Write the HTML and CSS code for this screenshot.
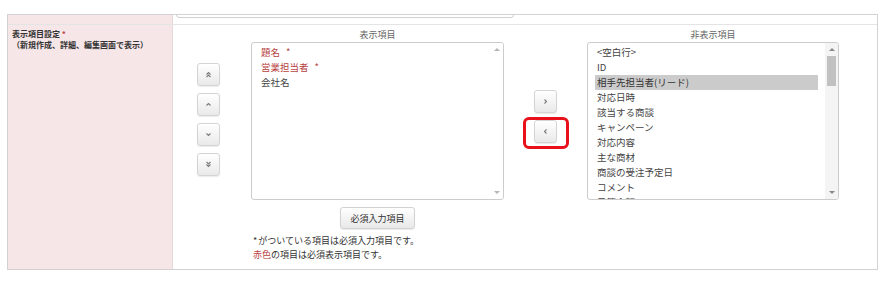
FILE: index.html
```html
<!DOCTYPE html>
<html lang="ja">

<head>
  <meta charset="UTF-8">
  <title>表示項目設定</title>
  <link rel="stylesheet" href="styles.css">
</head>

<body>
  <div class="form-table">
    <div class="row row-prev">
      <div class="label"><span class="req">*</span></div>
      <div class="cell">
        <div class="prev-input"></div>
      </div>
    </div>

    <div class="row">
      <div class="label label-main">
        表示項目設定 <span class="req">*</span><br>（新規作成、詳細、編集画面で表示）
      </div>
      <div class="cell picker">
        <!-- 並び替え -->
        <div class="btn-col order-btns">
          <button class="sq-btn" type="button"><svg viewBox="0 0 7 7"><polyline points="1.5,3.5 3.5,1.5 5.5,3.5" /><polyline points="1.5,6 3.5,4 5.5,6" /></svg></button>
          <button class="sq-btn" type="button"><svg viewBox="0 0 7 7"><polyline points="1.5,4.5 3.5,2.5 5.5,4.5" /></svg></button>
          <button class="sq-btn" type="button"><svg viewBox="0 0 7 7"><polyline points="1.5,2.5 3.5,4.5 5.5,2.5" /></svg></button>
          <button class="sq-btn" type="button"><svg viewBox="0 0 7 7"><polyline points="1.5,1 3.5,3 5.5,1" /><polyline points="1.5,3.5 3.5,5.5 5.5,3.5" /></svg></button>
        </div>

        <div class="list-block list-shown">
          <div class="list-title">表示項目</div>
          <div class="listbox">
            <ul class="items">
              <li class="must">題名<span class="star">*</span></li>
              <li class="must">営業担当者<span class="star">*</span></li>
              <li>会社名</li>
            </ul>
            <div class="scroll off">
              <span class="arrow up"></span>
              <span class="spacer"></span>
              <span class="arrow down"></span>
            </div>
          </div>
          <button class="btn-req" type="button">必須入力項目</button>
          <p class="notes">
            <span class="mark">*</span>がついている項目は必須入力項目です。<br>
            <span class="red">赤色</span>の項目は必須表示項目です。
          </p>
        </div>

        <!-- 移動 -->
        <div class="btn-col move-btns">
          <button class="sq-btn" type="button"><svg viewBox="0 0 7 7"><polyline points="2.5,1.5 4.5,3.5 2.5,5.5" /></svg></button>
          <button class="sq-btn marked" type="button"><svg viewBox="0 0 7 7"><polyline points="4.5,1.5 2.5,3.5 4.5,5.5" /></svg></button>
        </div>

        <div class="list-block list-hidden">
          <div class="list-title">非表示項目</div>
          <div class="listbox">
            <ul class="items">
              <li>&lt;空白行&gt;</li>
              <li>ID</li>
              <li class="selected">相手先担当者(リード)</li>
              <li>対応日時</li>
              <li>該当する商談</li>
              <li>キャンペーン</li>
              <li>対応内容</li>
              <li>主な商材</li>
              <li>商談の受注予定日</li>
              <li>コメント</li>
              <li>予算金額</li>
            </ul>
            <div class="scroll">
              <span class="arrow up"></span>
              <span class="thumb"></span>
              <span class="spacer"></span>
              <span class="arrow down"></span>
            </div>
          </div>
        </div>
      </div>
    </div>
  </div>
</body>

</html>
```

FILE: styles.css
```css
body {
  margin: 0;
  background-color: #ffffff;
  font-family: "Noto Sans CJK JP", "Noto Sans", sans-serif;
  color: #444444;
}

.form-table {
  box-sizing: border-box;
  width: 871px;
  margin: 14px 0 0 7px;
  border: 1px solid #d2d2d2;
}

.row {
  display: flex;
}

.row + .row {
  border-top: 1px solid #e4e4e4;
}

.label {
  box-sizing: border-box;
  width: 165px;
  flex-shrink: 0;
  background-color: #f6e6e8;
  /* rose pâle pour la colonne des libellés */
  border-right: 1px solid #e2dada;
}

.cell {
  flex: 1;
}

.req,
.star,
.red {
  color: #b8433f;
}

/* ligne précédente, coupée en haut */
.row-prev {
  height: 9px;
  overflow: hidden;
}

.row-prev .label {
  padding-left: 5px;
}

.row-prev .req {
  display: block;
  font-size: 9px;
  line-height: 10px;
  margin-top: -4px;
}

.prev-input {
  box-sizing: border-box;
  width: 338px;
  height: 13px;
  margin: -10px 0 0 3px;
  border: 1px solid #d0d0d0;
  border-radius: 3px;
}

.label-main {
  padding: 3px 4px 0 4px;
  font-size: 8px;
  font-weight: bold;
  line-height: 11px;
  color: #333333;
}

.picker {
  display: flex;
  align-items: flex-start;
  padding: 2px 0 7px 24px;
}

.btn-col {
  display: flex;
  flex-direction: column;
  gap: 7px;
  width: 23px;
}

.order-btns {
  padding-top: 36px;
}

.move-btns {
  padding-top: 63px;
  margin-left: 30px;
}

.sq-btn {
  position: relative;
  box-sizing: border-box;
  display: flex;
  align-items: center;
  justify-content: center;
  width: 23px;
  height: 23px;
  padding: 0;
  border: 1px solid #d4d4d4;
  border-radius: 3px;
  background: linear-gradient(#ffffff, #e9e9e9);
  box-shadow: 0 1px 1px rgba(0, 0, 0, 0.08);
}

.sq-btn svg {
  width: 7px;
  height: 7px;
  fill: none;
  stroke: #7a7a7a;
  stroke-width: 1.1;
}

/* cadre rouge d'annotation */
.marked::after {
  content: "";
  position: absolute;
  left: -12px;
  top: -4px;
  box-sizing: border-box;
  width: 46px;
  height: 32px;
  border: 3px solid #e8111b;
  border-radius: 6px;
}

.list-block {
  display: flex;
  flex-direction: column;
}

.list-shown {
  width: 253px;
  margin-left: 31px;
}

.list-hidden {
  width: 252px;
  margin-left: 30px;
}

.list-title {
  font-size: 9px;
  line-height: 15px;
  text-align: center;
  color: #666666;
}

.listbox {
  box-sizing: border-box;
  display: flex;
  height: 158px;
  border: 1px solid #cccccc;
  border-radius: 3px;
  overflow: hidden;
}

.items {
  flex: 1;
  margin: 0;
  padding: 2px 7px;
  list-style: none;
  overflow: hidden;
  font-size: 9.5px;
  line-height: 15px;
}

.items li {
  padding: 0 2px;
  white-space: nowrap;
}

.items .must {
  color: #b8433f;
}

.items .star {
  margin-left: 6px;
}

.items .selected {
  background-color: #cbcbcb;
  color: #333333;
}

.scroll {
  display: flex;
  flex-direction: column;
  align-items: center;
  width: 13px;
  background-color: #f4f4f4;
}

.spacer {
  flex: 1;
}

.arrow {
  width: 0;
  height: 0;
  border-left: 3px solid transparent;
  border-right: 3px solid transparent;
}

.arrow.up {
  margin-top: 5px;
  border-bottom: 3px solid #8a8a8a;
}

.arrow.down {
  margin-bottom: 5px;
  border-top: 3px solid #8a8a8a;
}

.scroll.off {
  background-color: #ffffff;
}

.scroll.off .arrow.up {
  border-bottom-color: #b5b5b5;
}

.scroll.off .arrow.down {
  border-top-color: #b5b5b5;
}

.thumb {
  width: 9px;
  height: 30px;
  margin-top: 5px;
  background-color: #c1c1c1;
}

.btn-req {
  align-self: center;
  height: 22px;
  margin-top: 7px;
  padding: 0 9px;
  border: 1px solid #d2d2d2;
  border-radius: 3px;
  background: linear-gradient(#ffffff, #e8e8e8);
  box-shadow: 0 1px 1px rgba(0, 0, 0, 0.08);
  font-family: inherit;
  font-size: 9px;
  color: #333333;
}

.notes {
  margin: 5px 0 0 0;
  padding-left: 2px;
  font-size: 9px;
  line-height: 14px;
  color: #333333;
}

.notes .mark {
  margin-right: 1px;
  font-size: 9px;
}
```
